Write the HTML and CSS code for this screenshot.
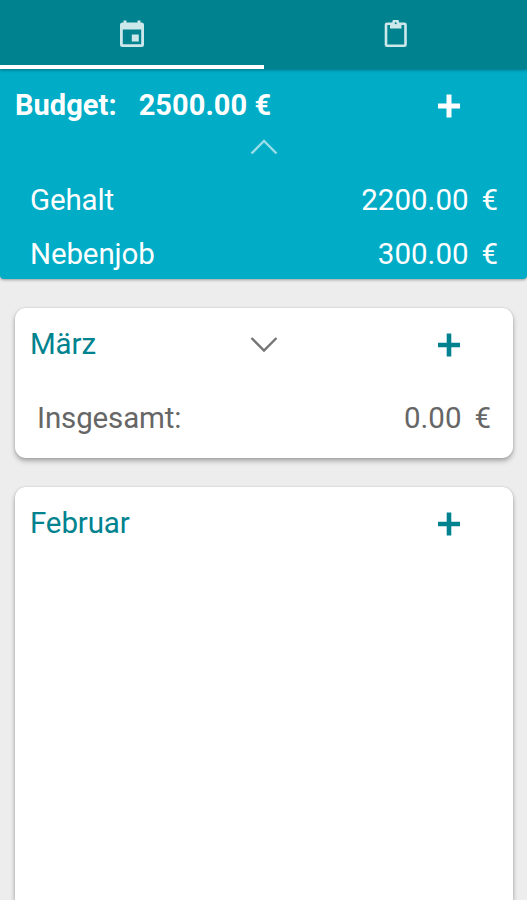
FILE: index.html
```
<!DOCTYPE html>
<html lang="de">

<head>
    <meta charset="UTF-8">
    <meta name="viewport" content="width=device-width, initial-scale=1.0">
    <title>Budget</title>
    <link rel="stylesheet" href="styles.css">
</head>

<body>
    <!-- Tabs -->
    <nav class="tabs">
        <a class="tab active">
            <svg width="26" height="28" viewBox="0 0 26 28">
                <path fill-rule="evenodd" d="M4.500.5h3v2h11v-2h3v2h1q2.500 0 2.500 2.500v19.500q0 2.500-2.500 2.500h-19Q1 27 1 24.500V5q0-2.500 2.500-2.500h1zM3.800 9.500v14.800h18.400V9.500z" />
                <path d="M12.800 14.500h7v7h-7z" />
            </svg>
        </a>
        <a class="tab">
            <svg width="24" height="28" viewBox="0 0 24 28">
                <path fill-rule="evenodd" d="M3 2.500h5.300a3.400 3.400 0 0 1 6.800 0H20.500q2.300 0 2.300 2.300v20q0 2.300-2.300 2.300H3Q.7 27.100.7 24.800v-20Q.7 2.500 3 2.500zM3.300 5v19.600h16.900V5h-2.700v3.500H6V5zM11.700 2.200a1 1 0 1 0 0 2 1 1 0 0 0 0-2z" />
            </svg>
        </a>
    </nav>

    <!-- Budget -->
    <section class="budget">
        <div class="budget-header">
            <span class="budget-label">Budget:</span>
            <span class="budget-sum">2500.00 €</span>
            <svg class="plus" width="24" height="24" viewBox="0 0 24 24">
                <path d="M12 .5v23M1 12h22" />
            </svg>
        </div>
        <svg class="chevron up" width="28" height="17" viewBox="0 0 28 17">
            <path d="M1.500 15.500 14 3l12.500 12.500" />
        </svg>
        <div class="entry">
            <span>Gehalt</span>
            <span class="amount">2200.00</span>
            <span class="currency">€</span>
        </div>
        <div class="entry">
            <span>Nebenjob</span>
            <span class="amount">300.00</span>
            <span class="currency">€</span>
        </div>
    </section>

    <!-- Monate -->
    <main>
        <section class="card">
            <div class="card-header">
                <span class="month">März</span>
                <svg class="chevron" width="28" height="17" viewBox="0 0 28 17">
                    <path d="M1.500 2 14 14.500 26.500 2" />
                </svg>
                <svg class="plus" width="24" height="24" viewBox="0 0 24 24">
                    <path d="M12 .5v23M1 12h22" />
                </svg>
            </div>
            <div class="total">
                <span>Insgesamt:</span>
                <span class="amount">0.00</span>
                <span class="currency">€</span>
            </div>
        </section>

        <section class="card open">
            <div class="card-header">
                <span class="month">Februar</span>
                <svg class="plus" width="24" height="24" viewBox="0 0 24 24">
                    <path d="M12 .5v23M1 12h22" />
                </svg>
            </div>
        </section>
    </main>
</body>

</html>
```

FILE: styles.css
```
* {
    box-sizing: border-box;
}

body {
    display: flex;
    flex-direction: column;
    height: 100vh;
    margin: 0;
    overflow: hidden;
    background-color: #ededed;
    font-family: Roboto, sans-serif;
    font-size: 29.5px;
    line-height: 36px;
    letter-spacing: -0.13px;
}

svg {
    display: block;
}

/* Tabs */
.tabs {
    display: flex;
    flex-shrink: 0;
    height: 69px;
    background-color: #00838f;
    box-shadow: 0 1px 3px rgba(0, 0, 0, 0.35);
    z-index: 1;
}

.tab {
    display: flex;
    width: 50%;
    justify-content: center;
    padding-top: 20px;
    border-bottom: 4px solid transparent;
}

.tab.active {
    border-bottom-color: #fff;
}

.tab + .tab {
    padding-left: 2px;
}

.tab svg {
    fill: #cce8eb;
}

/* Budget */
.budget {
    flex-shrink: 0;
    height: 210px;
    padding: 18px 29px 0 30px;
    border-radius: 0 0 4px 4px;
    background-color: #00acc6;
    box-shadow: 0 1px 3px rgba(0, 0, 0, 0.35);
    color: #fff;
}

.budget-header {
    display: flex;
    align-items: center;
    height: 36px;
    margin-left: -15px;
    font-size: 29px;
    font-weight: bold;
    letter-spacing: 0.05px;
}

.budget-sum {
    margin-left: 22px;
}

.plus {
    margin: 2px 37px 0 auto;
    fill: none;
    stroke: #00838f;
    stroke-width: 4.6;
}

.budget .plus {
    stroke: #fff;
    stroke-width: 5;
}

.chevron {
    fill: none;
    stroke: #757575;
    stroke-width: 2.4;
}

.chevron.up {
    margin: 15px auto 27px;
    stroke: #99dee8;
}

.entry,
.total {
    display: flex;
}

.entry {
    height: 54px;
}

.amount {
    margin-left: auto;
    letter-spacing: 0;
}

.currency {
    margin-left: 13px;
}

/* Monate */
main {
    display: flex;
    flex: 1;
    flex-direction: column;
    gap: 29px;
    min-height: 0;
    padding: 29px 14px 0 15px;
}

.card {
    flex-shrink: 0;
    height: 150px;
    border-radius: 11px;
    background-color: #fff;
    box-shadow: 0 3px 5px rgba(0, 0, 0, 0.3), 0 0 2px rgba(0, 0, 0, 0.15);
}

.card.open {
    flex: 1;
    height: auto;
    border-radius: 11px 11px 0 0;
}

.card-header {
    display: grid;
    grid-template-columns: 1fr 28px 1fr;
    align-items: center;
    padding: 18px 15px 0;
    color: #00838f;
}

.month {
    padding-top: 1px;
    line-height: 35px;
}

.card-header .plus {
    grid-column: 3;
}

.total {
    padding: 38px 22px 0;
    color: #666;
}
```
